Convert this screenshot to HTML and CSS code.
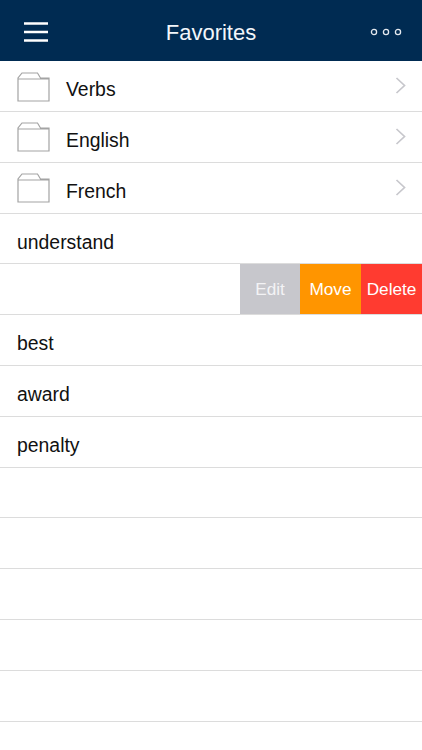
FILE: index.html
```html
<!DOCTYPE html>
<html lang="en">
<head>
<meta charset="utf-8">
<title>Favorites</title>
<link rel="stylesheet" href="styles.css">
</head>
<body>
<header class="bar">
  <svg class="menu" width="24" height="20" viewBox="0 0 24 20"><path d="M0 1.5h24M0 10h24M0 18.5h24" stroke="#fff" stroke-width="2.5" fill="none"/></svg>
  <h1 class="title">Favorites</h1>
  <svg class="more" width="32" height="8" viewBox="0 0 32 8"><circle cx="4" cy="4" r="2.6"/><circle cx="16" cy="4" r="2.6"/><circle cx="28" cy="4" r="2.6"/></svg>
</header>
<ul class="list">
  <li class="row folder">
    <svg class="folder-icon" width="33" height="30" viewBox="0 0 33 30"><path d="M1 29V6L5 1h15.5l3 5H32v23z M1 7h31" fill="none" stroke="#a3a3a3" stroke-width="1.2"/></svg>
    <span class="label">Verbs</span>
    <svg class="chev" width="11" height="17" viewBox="0 0 11 17"><path d="M1.5 1l8 7.5-8 7.5" fill="none" stroke="#c7c7cc" stroke-width="1.7"/></svg>
  </li>
  <li class="row folder">
    <svg class="folder-icon" width="33" height="30" viewBox="0 0 33 30"><path d="M1 29V6L5 1h15.5l3 5H32v23z M1 7h31" fill="none" stroke="#a3a3a3" stroke-width="1.2"/></svg>
    <span class="label">English</span>
    <svg class="chev" width="11" height="17" viewBox="0 0 11 17"><path d="M1.5 1l8 7.5-8 7.5" fill="none" stroke="#c7c7cc" stroke-width="1.7"/></svg>
  </li>
  <li class="row folder">
    <svg class="folder-icon" width="33" height="30" viewBox="0 0 33 30"><path d="M1 29V6L5 1h15.5l3 5H32v23z M1 7h31" fill="none" stroke="#a3a3a3" stroke-width="1.2"/></svg>
    <span class="label">French</span>
    <svg class="chev" width="11" height="17" viewBox="0 0 11 17"><path d="M1.5 1l8 7.5-8 7.5" fill="none" stroke="#c7c7cc" stroke-width="1.7"/></svg>
  </li>
  <li class="row"><span class="label">understand</span></li>
  <li class="row swiped">
    <div class="action edit">Edit</div>
    <div class="action move">Move</div>
    <div class="action delete">Delete</div>
  </li>
  <li class="row"><span class="label">best</span></li>
  <li class="row"><span class="label">award</span></li>
  <li class="row"><span class="label">penalty</span></li>
  <li class="row"></li>
  <li class="row"></li>
  <li class="row"></li>
  <li class="row"></li>
  <li class="row"></li>
</ul>
</body>
</html>
```
FILE: styles.css
```css
* { box-sizing: border-box; }
html, body { margin: 0; height: 100%; background: #fff; overflow: hidden; }
body { font-family: "Liberation Sans", Arial, sans-serif; color: #111; }
.bar {
  height: 60.5px;
  background: #002b52;
  display: flex;
  align-items: center;
  justify-content: space-between;
  padding: 3px 20px 0 24px;
  position: relative;
}
.title {
  position: absolute;
  left: 0;
  right: 0;
  margin: 0;
  padding-top: 3px;
  text-align: center;
  font-size: 22px;
  font-weight: 400;
  color: #f2f6fa;
}
.menu { display: block; }
.more { display: block; margin-bottom: 0; }
.more circle { fill: none; stroke: #e4e9ef; stroke-width: 1.3; }
.list { list-style: none; margin: 0; padding: 0.8px 0 0; }
.row {
  height: 50.8px;
  border-bottom: 1px solid #dcdcdc;
  display: flex;
  align-items: center;
  padding: 7px 0 0 17px;
  font-size: 19.4px;
}
.folder { padding-left: 17px; }
.folder-icon { margin: -6px 16px 0 0; flex: none; }
.folder .label { flex: 1; }
.chev { margin: -8px 16px 0 0; }
.swiped { padding: 0; justify-content: flex-end; align-items: stretch; font-size: 17.2px; }
.action { width: 61px; padding-top: 1px; color: #fff; display: flex; align-items: center; justify-content: center; }
.edit { width: 60px; background: #c7c7cc; color: #f3f3f5; }
.move { background: #ff9500; }
.delete { background: #ff3b30; }
```
